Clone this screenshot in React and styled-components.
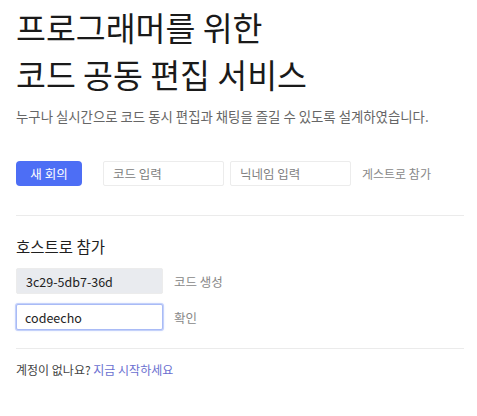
import React from 'react';
import styled, { createGlobalStyle } from 'styled-components';

const Global = createGlobalStyle`
  body {
    margin: 0;
    background: #fff;
    font-family: "Noto Sans CJK KR", "Noto Sans", sans-serif;
    color: #222;
  }
`

const Page = styled.div`
  width: 448px;
  padding: 3px 16px 0;
`

const Title = styled.h1`
  margin: 0;
  font-size: 32.5px;
  font-weight: 400;
  line-height: 47px;
  color: #1a1a1a;
`

const Lead = styled.p`
  margin: 10px 0 0;
  font-size: 13.4px;
  line-height: 19px;
  color: #666;
`

const Row = styled.div`
  display: flex;
  align-items: center;
  gap: ${p => p.gap || 11}px;
  margin-top: ${p => p.top || 0}px;
`

const Primary = styled.button`
  width: 66px;
  height: 25px;
  border: 0;
  border-radius: 4px;
  background: #4d6ef5;
  color: #fff;
  font-family: inherit;
  font-size: 12.5px;
  margin-right: 15px;
`

const Field = styled.input`
  box-sizing: border-box;
  width: ${p => p.w || 120}px;
  height: ${p => p.h || 25}px;
  padding: 0 ${p => p.pad || 9}px;
  border: 1px solid ${p => p.focused ? '#a9bbf6' : '#ececec'};
  border-radius: 2px;
  background: ${p => p.filled ? '#e9ebef' : '#fff'};
  box-shadow: ${p => p.focused ? '0 0 0 1px #c4d1fa, 0 0 3px #c4d1fa' : 'none'};
  font-family: inherit;
  font-size: 12.5px;
  color: #222;
  outline: none;
  &::placeholder { color: #808080; }
`

const TextLink = styled.span`
  font-size: ${p => p.size || 12.5}px;
  color: ${p => p.accent ? '#6a6fd0' : '#888'};
  margin-left: ${p => p.ml || 0}px;
`

const Rule = styled.hr`
  margin: ${p => p.top}px 0 0;
  border: 0;
  border-top: 1px solid #ebebeb;
`

const Section = styled.h2`
  margin: 19px 0 0;
  font-size: 15.5px;
  font-weight: 400;
  line-height: 22px;
  color: #1f1f1f;
`

const Footer = styled.p`
  margin: 11px 0 0;
  font-size: 12px;
  line-height: 20px;
  color: #444;
`

export default function App() {
  return (
    <Page>
      <Global />
      <Title>프로그래머를 위한<br />코드 공동 편집 서비스</Title>
      <Lead>누구나 실시간으로 코드 동시 편집과 채팅을 즐길 수 있도록 설계하였습니다.</Lead>
      <Row top={35} gap={6}>
        <Primary>새 회의</Primary>
        <Field placeholder="코드 입력" w={121} />
        <Field placeholder="닉네임 입력" w={121} />
        <TextLink size={12} ml={5}>게스트로 참가</TextLink>
      </Row>
      <Rule top={29} />
      <Section>호스트로 참가</Section>
      <Row top={11}>
        <Field filled readOnly value="3c29-5db7-36d" w={147} h={26} />
        <TextLink>코드 생성</TextLink>
      </Row>
      <Row top={10}>
        <Field focused readOnly value="codeecho" w={147} h={26} pad={8} />
        <TextLink>확인</TextLink>
      </Row>
      <Rule top={18} />
      <Footer>계정이 없나요? <TextLink size={12} accent>지금 시작하세요</TextLink></Footer>
    </Page>
  );
}
